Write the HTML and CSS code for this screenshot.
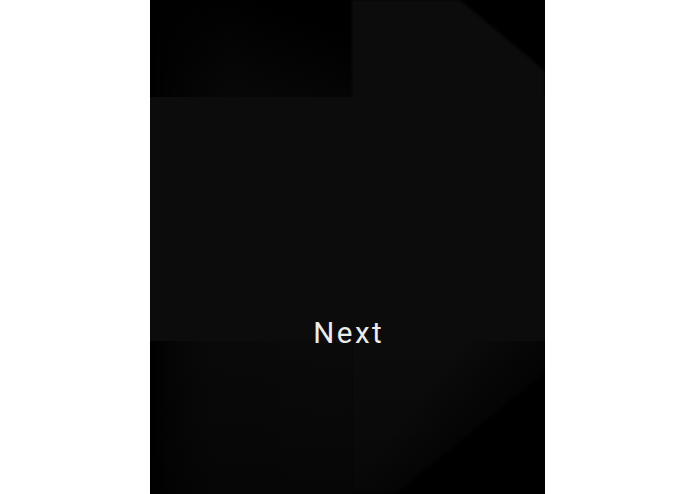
FILE: index.html
```html
<!DOCTYPE html>
<html>
<head>
<meta charset="utf-8">
<link rel="stylesheet" href="styles.css">
</head>
<body>
<div class="screen">
  <div class="glow-top"></div>
  <div class="glow-bottom"></div>
  <div class="band"></div>
  <div class="column-wrap"><div class="column"></div></div>
  <div class="shade"></div>
  <div class="label">Next</div>
</div>
</body>
</html>
```
FILE: styles.css
```css
html, body {
  margin: 0;
  padding: 0;
  background: #ffffff;
}
body {
  width: 695px;
  height: 494px;
  overflow: hidden;
}
.screen {
  margin-left: 150px;
  width: 395px;
  height: 494px;
  background: #000000;
  display: grid;
  grid-template-columns: 202px 193px;
  grid-template-rows: 97px 244px 153px;
  overflow: hidden;
}
.glow-top {
  grid-column: 1;
  grid-row: 1;
  background: linear-gradient(200deg, #000 20%, #070707 75%, #0a0a0a 100%);
  -webkit-mask-image: linear-gradient(90deg, transparent 0, #000 40%);
  mask-image: linear-gradient(90deg, transparent 0, #000 40%);
}
.glow-bottom {
  grid-column: 1;
  grid-row: 3;
  background: linear-gradient(90deg, #000 0, #050505 10%, #090909 30%, #0a0a0a 100%);
}
.band {
  grid-column: 1 / 3;
  grid-row: 2;
  background: #0c0c0c;
}
.column-wrap {
  grid-column: 2;
  grid-row: 1 / 4;
  filter: blur(1.5px);
  display: flex;
  z-index: 1;
}
.column {
  flex: 1;
  background: #0c0c0c;
  clip-path: polygon(0 0, 108px 0, 100% 71px, 100% 372px, 43px 100%, 0 100%);
}
.shade {
  grid-column: 1 / 3;
  grid-row: 3;
  z-index: 2;
  background:
    linear-gradient(128deg, rgba(0,0,0,0) 60%, rgba(0,0,0,0.5) 74%, rgba(0,0,0,0.85) 88%),
    linear-gradient(180deg, rgba(0,0,0,0) 0, rgba(0,0,0,0.2) 60%, rgba(0,0,0,0.4) 100%);
}
.label {
  grid-column: 1 / 3;
  grid-row: 2;
  align-self: end;
  margin-bottom: -9px;
  text-align: center;
  font-family: Roboto, "Liberation Sans", sans-serif;
  font-size: 29.5px;
  font-weight: 400;
  line-height: 34px;
  letter-spacing: 2.5px;
  text-indent: 2.5px;
  color: #ececec;
  z-index: 3;
}
```
